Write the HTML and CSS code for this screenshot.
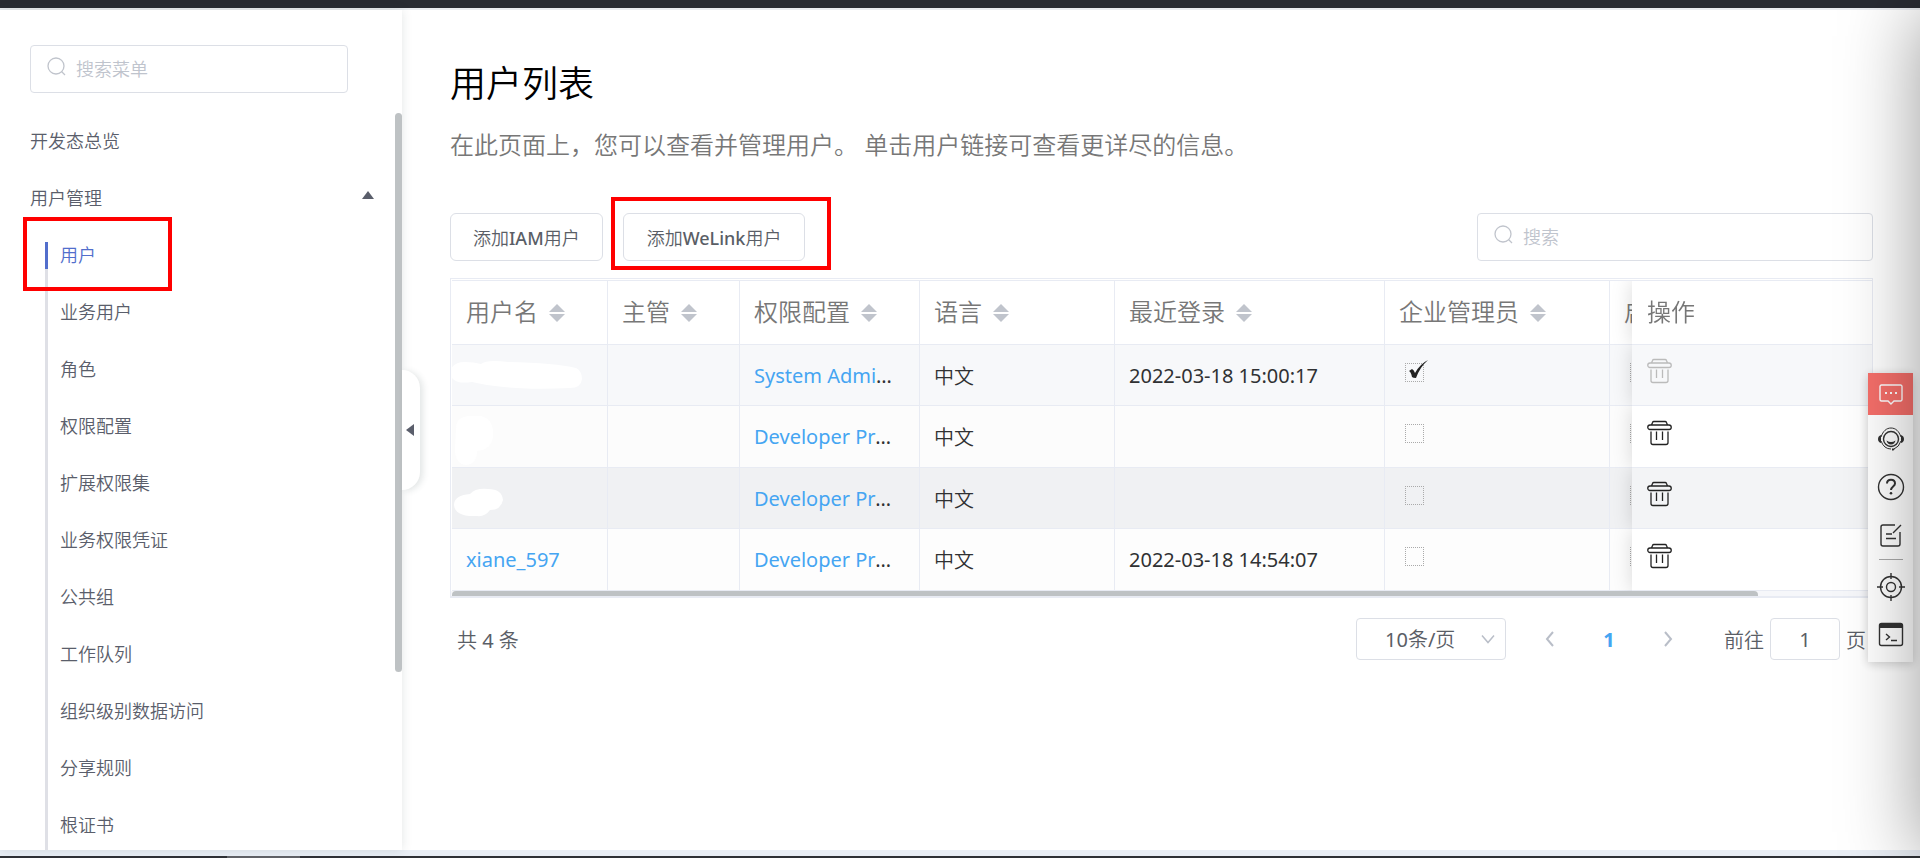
FILE: index.html
```html
<!DOCTYPE html>
<html lang="zh-CN">
<head>
<meta charset="utf-8">
<title>用户列表</title>
<link rel="stylesheet" href="styles.css">
</head>
<body>
<svg width="0" height="0" class="sprite" aria-hidden="true">
  <symbol id="search" viewBox="0 0 20 20"><circle cx="9" cy="9" r="8"/><path d="M14.5 14.5 18 18"/></symbol>
  <symbol id="sort" viewBox="0 0 16 18"><path d="M8 0 16 8H0zM0 10h16L8 18z"/></symbol>
  <symbol id="trash" viewBox="0 0 26 26"><path d="M4.500 5 5.500 2.500a1.500 1.500 0 0 1 1.500-1h11a1.500 1.500 0 0 1 1.500 1L20.500 5M3 5h19a2.250 2.250 0 0 1 0 4.500H3A2.250 2.250 0 0 1 3 5zM4 11.500v11A2 2 0 0 0 6 24.500h13a2 2 0 0 0 2-2v-11M9.500 11.500v8.500M15.500 11.500v8.500"/></symbol>
</svg>
<div class="topbar"></div>
<div class="shell">
  <aside class="sidebar">
    <label class="search">
      <svg class="search-icon" width="20" height="20"><use href="#search"/></svg>
      <input type="text" placeholder="搜索菜单" aria-label="搜索菜单">
    </label>
    <nav class="menu">
      <a class="item" href="#">开发态总览</a>
      <a class="item" href="#">用户管理<svg class="fold" width="12" height="8" viewBox="0 0 12 8"><path d="M6 0 12 8H0z"/></svg></a>
      <div class="submenu">
        <a class="item active" href="#">用户</a>
        <a class="item" href="#">业务用户</a>
        <a class="item" href="#">角色</a>
        <a class="item" href="#">权限配置</a>
        <a class="item" href="#">扩展权限集</a>
        <a class="item" href="#">业务权限凭证</a>
        <a class="item" href="#">公共组</a>
        <a class="item" href="#">工作队列</a>
        <a class="item" href="#">组织级别数据访问</a>
        <a class="item" href="#">分享规则</a>
        <a class="item" href="#">根证书</a>
      </div>
    </nav>
    <div class="menu-scroll"></div>
    <button class="collapse" aria-label="收起菜单"><svg width="8" height="12" viewBox="0 0 8 12"><path d="M0 6 8 0v12z"/></svg></button>
    <div class="mark mark-menu"></div>
  </aside>
  <main class="main">
    <h1>用户列表</h1>
    <p class="intro">在此页面上，您可以查看并管理用户。 单击用户链接可查看更详尽的信息。</p>
    <div class="toolbar">
      <button class="btn">添加IAM用户</button>
      <span class="marked"><button class="btn">添加WeLink用户</button><span class="mark mark-btn"></span></span>
      <label class="search search-table">
        <svg class="search-icon" width="20" height="20"><use href="#search"/></svg>
        <input type="text" placeholder="搜索" aria-label="搜索">
      </label>
    </div>
    <div class="grid">
      <div class="viewport">
        <table>
          <colgroup><col class="c-name"><col class="c-boss"><col class="c-perm"><col class="c-lang"><col class="c-login"><col class="c-admin"><col class="c-on"><col class="c-act"></colgroup>
          <thead>
            <tr>
              <th>用户名<svg class="sort" width="16" height="18"><use href="#sort"/></svg></th>
              <th>主管<svg class="sort" width="16" height="18"><use href="#sort"/></svg></th>
              <th>权限配置<svg class="sort" width="16" height="18"><use href="#sort"/></svg></th>
              <th>语言<svg class="sort" width="16" height="18"><use href="#sort"/></svg></th>
              <th>最近登录<svg class="sort" width="16" height="18"><use href="#sort"/></svg></th>
              <th>企业管理员<svg class="sort" width="16" height="18"><use href="#sort"/></svg></th>
              <th>启用</th>
              <th class="fixed">操作</th>
            </tr>
          </thead>
          <tbody>
            <tr class="r1">
              <td><svg class="smudge" width="133" height="60" viewBox="0 0 133 60"><path d="M0 26Q3 17 15 17Q24 17 31 19Q37 14 58 17Q105 18 126 23Q132 26 132 34Q131 43 120 43Q60 46 22 37Q2 40 0 28z"/></svg></td>
              <td></td><td class="perm"><a href="#">System Administrator</a></td><td>中文</td><td>2022-03-18 15:00:17</td>
              <td><span class="tick"><input type="checkbox" checked disabled aria-label="企业管理员"><svg width="20" height="20" viewBox="0 0 20 20"><path d="M0 11 3 9Q5 10 6 13Q11 4 19 0Q11 7 7 18Q4 18 3 17Q2 12 0 11z"/></svg></span></td>
              <td><input type="checkbox" disabled aria-label="启用"></td>
              <td class="fixed"><button class="trash off" aria-label="删除" disabled><svg width="26" height="26"><use href="#trash"/></svg></button></td>
            </tr>
            <tr class="r2">
              <td><svg class="smudge" width="60" height="60" viewBox="0 0 60 60"><path d="M6 22Q6 11 19 10H31Q43 13 43 27Q44 43 27 45Q27 58 16 59Q5 58 5 43z"/></svg></td>
              <td></td><td class="perm"><a href="#">Developer Profile</a></td><td>中文</td><td></td>
              <td><input type="checkbox" disabled aria-label="企业管理员"></td>
              <td><input type="checkbox" disabled aria-label="启用"></td>
              <td class="fixed"><button class="trash" aria-label="删除"><svg width="26" height="26"><use href="#trash"/></svg></button></td>
            </tr>
            <tr class="r3">
              <td><svg class="smudge" width="60" height="60" viewBox="0 0 60 60"><path d="M4 36Q5 27 20 26Q25 20 38 21Q52 21 53 32Q51 42 40 42Q35 49 27 48Q5 49 4 37z"/></svg></td>
              <td></td><td class="perm"><a href="#">Developer Profile</a></td><td>中文</td><td></td>
              <td><input type="checkbox" disabled aria-label="企业管理员"></td>
              <td><input type="checkbox" disabled aria-label="启用"></td>
              <td class="fixed"><button class="trash" aria-label="删除"><svg width="26" height="26"><use href="#trash"/></svg></button></td>
            </tr>
            <tr class="r4">
              <td><a href="#">xiane_597</a></td>
              <td></td><td class="perm"><a href="#">Developer Profile</a></td><td>中文</td><td>2022-03-18 14:54:07</td>
              <td><input type="checkbox" disabled aria-label="企业管理员"></td>
              <td><input type="checkbox" disabled aria-label="启用"></td>
              <td class="fixed"><button class="trash" aria-label="删除"><svg width="26" height="26"><use href="#trash"/></svg></button></td>
            </tr>
          </tbody>
        </table>
      </div>
      <div class="track"><div class="thumb"></div></div>
    </div>
    <div class="pager">
      <span class="total">共 4 条</span>
      <span class="size"><select aria-label="每页条数"><option>10条/页</option></select><svg width="14" height="10" viewBox="0 0 14 10"><path d="M1 1.500 7 8.500 13 1.500"/></svg></span>
      <button class="step" aria-label="上一页"><svg width="10" height="16" viewBox="0 0 10 16"><path d="M8 1 2 8 8 15"/></svg></button>
      <button class="page">1</button>
      <button class="step" aria-label="下一页"><svg width="10" height="16" viewBox="0 0 10 16"><path d="M2 1 8 8 2 15"/></svg></button>
      <label class="jump">前往<input type="text" value="1">页</label>
    </div>
  </main>
</div>
<div class="dock">
  <button class="chat" aria-label="反馈"><svg width="28" height="28" viewBox="0 0 28 28"><path d="M4.500 5h19a1.500 1.500 0 0 1 1.500 1.500v13a1.500 1.500 0 0 1-1.500 1.500H17l-3 3-3-3H4.500A1.500 1.500 0 0 1 3 19.500v-13A1.500 1.500 0 0 1 4.500 5z"/><path class="solid" d="M8 12h2v2H8zM13 12h2v2h-2zM18 12h2v2h-2z"/></svg></button>
  <button aria-label="客服"><svg width="28" height="28" viewBox="0 0 28 28"><circle cx="14" cy="14" r="7.500"/><path class="thin" d="M4 12C6 6 9.500 3 14 3S22 6 24 12M4 16Q7 24 14 24M24 16Q22 22 17 24"/><path class="solid" d="M4 10v8Q1 17 1 14 1 11 4 10zM24 10v8q3-1 3-4 0-3-3-4zM9.500 15.500q4.500 3 9 0-1 4-4.500 4t-4.500-4zM15 23.500h3l-1.500 2H15z"/></svg></button>
  <button aria-label="帮助"><svg width="28" height="28" viewBox="0 0 28 28"><circle cx="14" cy="14" r="12.500"/><path class="bold" d="M10 10.500C10 5.500 18 5.500 18 10.500 18 13.500 14 13.500 14 17"/><circle class="solid" cx="14" cy="20.300" r="1.300"/></svg></button>
  <button aria-label="文档"><svg width="28" height="28" viewBox="0 0 28 28"><path d="M18 4H6a2 2 0 0 0-2 2v17a2 2 0 0 0 2 2h15a2 2 0 0 0 2-2V11M24 4l-8 8M9 13h6M9 17.500h10"/></svg></button>
  <hr>
  <button aria-label="定位"><svg width="28" height="28" viewBox="0 0 28 28"><circle cx="14" cy="14" r="10.500"/><circle cx="14" cy="14" r="4.500"/><path d="M14 0v6M14 22v6M0 14h6M22 14h6"/></svg></button>
  <button aria-label="终端"><svg width="28" height="28" viewBox="0 0 28 28"><rect x="2.500" y="2.500" width="23" height="22" rx="2"/><path class="solid" d="M3 3h22v4H3z"/><path d="M9 13l3.500 3L9 19M14 19.500h6"/></svg></button>
</div>
<div class="edge-shade"></div>
<div class="statusbar"></div>
</body>
</html>
```
FILE: styles.css
```css
* { box-sizing: border-box; }
body {
  margin: 0;
  height: 100vh;
  display: flex;
  flex-direction: column;
  position: relative;
  overflow: hidden;
  background: #fff;
  color: #5a5e66;
  font-family: "Noto Sans", "Noto Sans CJK SC DemiLight", "Noto Sans CJK SC", sans-serif;
  font-size: 20px;
  font-weight: 400;
}
a { color: #45a5f2; text-decoration: none; }
button, input, select { font: inherit; color: inherit; }
button { padding: 0; border: 0; background: none; }
.sprite { position: absolute; }
.topbar { flex: none; height: 10px; background: #282b33; border-bottom: 2px solid #e8ebf0; }
.statusbar {
  flex: none;
  height: 8px;
  border-top: 6px solid #e9eef5;
  background: linear-gradient(90deg, #2f3136 227px, #606267 227px, #606267 300px, #2f3136 300px);
}
.shell { flex: 1; min-height: 0; display: flex; }

.sidebar {
  position: relative;
  flex: none;
  width: 402px;
  padding: 35px 0 0 30px;
  display: flex;
  flex-direction: column;
  box-shadow: 0 0 10px rgba(40, 60, 60, .13);
}
.search {
  flex: none;
  display: flex;
  align-items: center;
  gap: 9px;
  width: 318px;
  height: 48px;
  padding: 0 16px;
  border: 1px solid #dcdfe6;
  border-radius: 4px;
  background: #fff;
  font-size: 18px;
}
.search input { flex: 1; min-width: 0; padding: 0; border: 0; outline: 0; background: none; }
.search input::placeholder { color: #bfc4cd; opacity: 1; }
.search-icon { flex: none; margin-bottom: 4px; fill: none; stroke: #c0c4cc; stroke-width: 1.300; }
.menu { flex: 1; min-height: 0; margin-top: 18px; overflow: hidden; font-size: 18px; }
.item { display: flex; align-items: center; justify-content: space-between; height: 57px; padding-right: 28px; color: #5a5e6b; }
.fold { margin-bottom: 3px; }
.fold, .collapse svg { fill: #5a5e6b; }
.submenu { position: relative; margin-left: 15px; padding-left: 15px; }
.submenu::before, .submenu::after { content: ""; position: absolute; left: 0; top: 17px; width: 3px; }
.submenu::before { bottom: 0; background: #dfe0e6; }
.submenu::after { height: 27px; background: #526ecc; }
.menu .active { color: #526ecc; }
.menu-scroll { position: absolute; right: 0; top: 103px; width: 7px; height: 559px; border-radius: 4px; background: #bec2c4; }
.collapse {
  position: absolute;
  left: 100%;
  top: 360px;
  width: 18px;
  height: 120px;
  border-radius: 0 18px 18px 0;
  background: #fff;
  box-shadow: 3px 1px 6px rgba(40, 60, 60, .13);
}
.collapse svg { display: block; margin-left: 4px; }
.mark { position: absolute; border: 4px solid #f00; pointer-events: none; }
.mark-menu { left: 23px; top: 207px; width: 149px; height: 74px; }
.mark-btn { inset: -16px -26px -9px -12px; }

.main { flex: 1; min-width: 0; padding: 46px 47px 0 48px; }
h1 { margin: 0; color: #000; font-size: 36px; font-weight: 400; line-height: 56px; }
.intro { margin: 15px 0 50px; color: #777; font-size: 24px; line-height: 36px; }
.toolbar { display: flex; gap: 20px; }
.btn { height: 48px; padding: 0 22px; border: 1px solid #dcdfe6; border-radius: 6px; background: #fff; font-size: 18px; font-weight: 500; }
.marked { position: relative; }
.marked .btn { padding: 0 23px; }
.search-table { width: 396px; margin-left: auto; }

.grid { margin-top: 17px; border: 1px solid #e8ebf3; border-bottom: 0; }
.viewport { margin: 1px 0 0 1px; border-top: 1px solid #e8ebf3; overflow: hidden; }
table { width: 1549px; table-layout: fixed; border-collapse: separate; border-spacing: 0; }
.c-name { width: 156px; } .c-boss { width: 132px; } .c-perm { width: 180px; } .c-lang { width: 195px; }
.c-login { width: 270px; } .c-admin { width: 225px; } .c-on { width: 151px; } .c-act { width: 240px; }
th, td {
  position: relative;
  padding: 0 15px 0 14px;
  border-right: 1px solid #e8ebf3;
  border-bottom: 1px solid #e8ebf3;
  text-align: left;
  white-space: nowrap;
  overflow: hidden;
  text-overflow: ellipsis;
}
th { height: 64px; padding-bottom: 4px; color: #777; font-size: 24px; font-weight: 400; background: #fff; }
td { height: 61px; color: #303133; }
tr:nth-child(even) td { height: 62px; }
.perm { padding-right: 22px; }
.sort { margin-left: 11px; vertical-align: -1px; fill: #c0c4cc; }
.r1 td { background: #f7f8fa; }
.r2 td { background: #fcfcfc; }
.r3 td { background: #f0f1f3; }
.r4 td { background: #fdfdfd; }
.r2 .fixed, .r4 .fixed { background: #fff; }
.r3 .fixed { background: #f3f4f6; }
.fixed { position: sticky; right: 0; padding-left: 15px; border-right: 0; overflow: visible; box-shadow: 0 0 20px rgba(0, 0, 0, .15); clip-path: inset(0 0 0 -30px); }
.smudge { position: absolute; left: -2px; top: 0; fill: #fff; }
input[type="checkbox"] {
  appearance: none;
  display: block;
  width: 19px;
  height: 19px;
  margin: 0 0 6px 6px;
  border: 1px dotted #aaa;
}
.tick { position: relative; display: block; }
.tick svg { position: absolute; left: 10px; top: -3px; fill: #222; }
.trash { display: block; margin-bottom: 8px; }
.trash svg { display: block; fill: none; stroke: #222; stroke-width: 1.300; }
.off svg { stroke: #bbb; }
.track { height: 7px; padding-left: 1px; background: #f6f7fa; border-bottom: 2px solid #e8ebf3; }
.thumb { width: 92%; height: 5px; border-radius: 4px 4px 0 0; background: #bec2c4; }

.pager { display: flex; align-items: center; height: 42px; margin-top: 20px; padding: 0 7px; }
.total { margin-right: auto; }
.size { position: relative; display: flex; }
.size select { appearance: none; width: 150px; height: 42px; padding: 0 28px; border: 1px solid #dcdfe6; border-radius: 4px; background: #fff; }
.size svg { position: absolute; right: 11px; top: 16px; }
.size svg, .step svg { fill: none; stroke: #b9bec8; stroke-width: 1.500; pointer-events: none; }
.step svg { display: block; stroke-width: 2; }
.pager .step { width: 88px; display: flex; justify-content: center; }
.pager .page { width: 30px; color: #45a5f2; font-weight: 700; }
.jump { display: flex; align-items: center; gap: 6px; margin-left: 12px; }
.jump input { width: 70px; height: 42px; padding: 0; border: 1px solid #dcdfe6; border-radius: 4px; text-align: center; }

.dock { position: absolute; right: 7px; top: 373px; width: 45px; padding-bottom: 3px; background: #fff; box-shadow: 0 2px 10px rgba(0, 0, 0, .2); }
.dock button { display: flex; width: 100%; height: 48px; align-items: center; justify-content: center; }
.dock .chat { height: 42px; background: #f66f6a; }
.dock svg { fill: none; stroke: #333; stroke-width: 1.400; }
.dock .chat svg { stroke: #fff; }
.dock .solid { fill: #333; stroke: none; }
.dock .chat .solid { fill: #fff; }
.dock .bold { stroke-width: 2; }
.dock .thin { stroke-width: 1; }
.dock hr { width: 24px; height: 1px; margin: 0 auto 3px; border: 0; background: #aaa; }
.edge-shade { position: absolute; left: 100%; top: 10px; bottom: 0; width: 100px; box-shadow: 0 0 80px rgba(0, 0, 0, .4); pointer-events: none; }
```
